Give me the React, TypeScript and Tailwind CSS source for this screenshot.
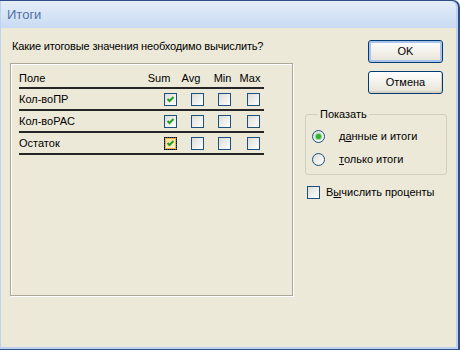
import React from 'react';

const font = { fontFamily: '"Liberation Sans", Arial, sans-serif' };

const Check = ({ checked = false, focus = false }: { checked?: boolean; focus?: boolean }) => (
  <span
    className={`flex h-[13px] w-[13px] shrink-0 items-center justify-center border border-[#1c5180] ${
      focus
        ? 'bg-gradient-to-br from-[#fbd98c] to-[#fff6dc] outline outline-1 outline-dotted outline-black -outline-offset-1 shadow-[inset_0_0_0_1px_#f5b540]'
        : 'bg-gradient-to-br from-[#dcdcd7] to-white'
    }`}
  >
    {checked && (
      <svg width="11" height="11" viewBox="0 0 11 11">
        <polyline points="2.5,5 4.5,7 8.5,3" fill="none" stroke="#21a121" strokeWidth="2" />
      </svg>
    )}
  </span>
);

const Radio = ({ checked = false }: { checked?: boolean }) => (
  <span className="flex h-[13px] w-[13px] shrink-0 items-center justify-center rounded-full border border-[#1c5180] bg-gradient-to-br from-[#dcdcd7] to-white">
    {checked && <span className="h-[5px] w-[5px] rounded-full bg-[#2eb32e] shadow-[0_0_0_1px_#8fd88f]" />}
  </span>
);

const Line = () => <div className="h-[2px] w-[245px] bg-[#262626]" />;

const rows = [
  { name: 'Кол-воПР', focus: false },
  { name: 'Кол-воРАС', focus: false },
  { name: 'Остаток', focus: true },
];

export default function App() {
  return (
    <div style={font} className="h-[350px] w-[460px] overflow-hidden rounded-tr-[7px] bg-[#2d4f86] pb-[1px] pr-[2px] pt-[1px] text-[11px] text-black">
      <div className="flex h-full flex-col rounded-tr-[6px] bg-[#bcd2f1] pb-[2px] pl-[1px] pr-[2px]">
        {/* title bar */}
        <div className="flex h-[27px] items-center rounded-tr-[6px] bg-gradient-to-b from-[#e5eefa] to-[#c8daf2] pl-[6px] text-[13px] text-[#5271a6]">
          Итоги
        </div>
        {/* body */}
        <div className="flex flex-1 bg-[#ece9d8] pl-[9px] pt-[11px]">
          <div className="flex flex-col">
            <div className="ml-[2px] h-[14px] leading-[14px] tracking-[-0.15px]">Какие итоговые значения необходимо вычислить?</div>
            <div className="mt-[10px] h-[233px] w-[283px] border border-[#aca899] px-[8px] pt-[6px] shadow-[inset_1px_1px_0_#fff,1px_1px_0_#fff]">
              <div className="flex h-[17px] items-center">
                <span className="w-[126px]">Поле</span>
                <span className="w-[28px] text-center">Sum</span>
                <span className="w-[36px] text-center">Avg</span>
                <span className="w-[27px] text-center">Min</span>
                <span className="w-[28px] text-center">Max</span>
              </div>
              <Line />
              {rows.map((r) => (
                <div key={r.name}>
                  <div className="flex h-[20px] items-center">
                    <span className="w-[145px]">{r.name}</span>
                    <Check checked focus={r.focus} />
                    <span className="ml-[14px]"><Check /></span>
                    <span className="ml-[14px]"><Check /></span>
                    <span className="ml-[16px]"><Check /></span>
                  </div>
                  <Line />
                </div>
              ))}
            </div>
          </div>

          <div className="ml-[12px] flex w-[142px] flex-col pt-[1px]">
            <button className="ml-[63px] flex h-[23px] w-[75px] items-center justify-center rounded-[3px] border border-[#003c74] bg-gradient-to-b from-white to-[#e6e3d6] shadow-[inset_0_0_0_2px_#a9c4ee]">
              OK
            </button>
            <button className="ml-[63px] mt-[8px] flex h-[23px] w-[75px] items-center justify-center rounded-[3px] border border-[#003c74] bg-gradient-to-b from-white to-[#e6e3d6] shadow-[inset_-1px_-2px_0_#d6d0c5]">
              Отмена
            </button>
            <fieldset className="mt-[13px] rounded-[3px] border border-[#d0d0bf] pb-[3px] pl-[6px] pt-[4px]">
              <legend className="ml-[6px] px-[2px] leading-[14px]">Показать</legend>
              <div className="flex h-[23px] items-center">
                <Radio checked />
                <span className="ml-[14px]">д<u>а</u>нные и итоги</span>
              </div>
              <div className="flex h-[23px] items-center">
                <Radio />
                <span className="ml-[14px]"><u>т</u>олько итоги</span>
              </div>
            </fieldset>
            <div className="ml-[2px] mt-[9px] flex items-center">
              <Check />
              <span className="ml-[6px]">В<u>ы</u>числить проценты</span>
            </div>
          </div>
        </div>
      </div>
    </div>
  );
}
